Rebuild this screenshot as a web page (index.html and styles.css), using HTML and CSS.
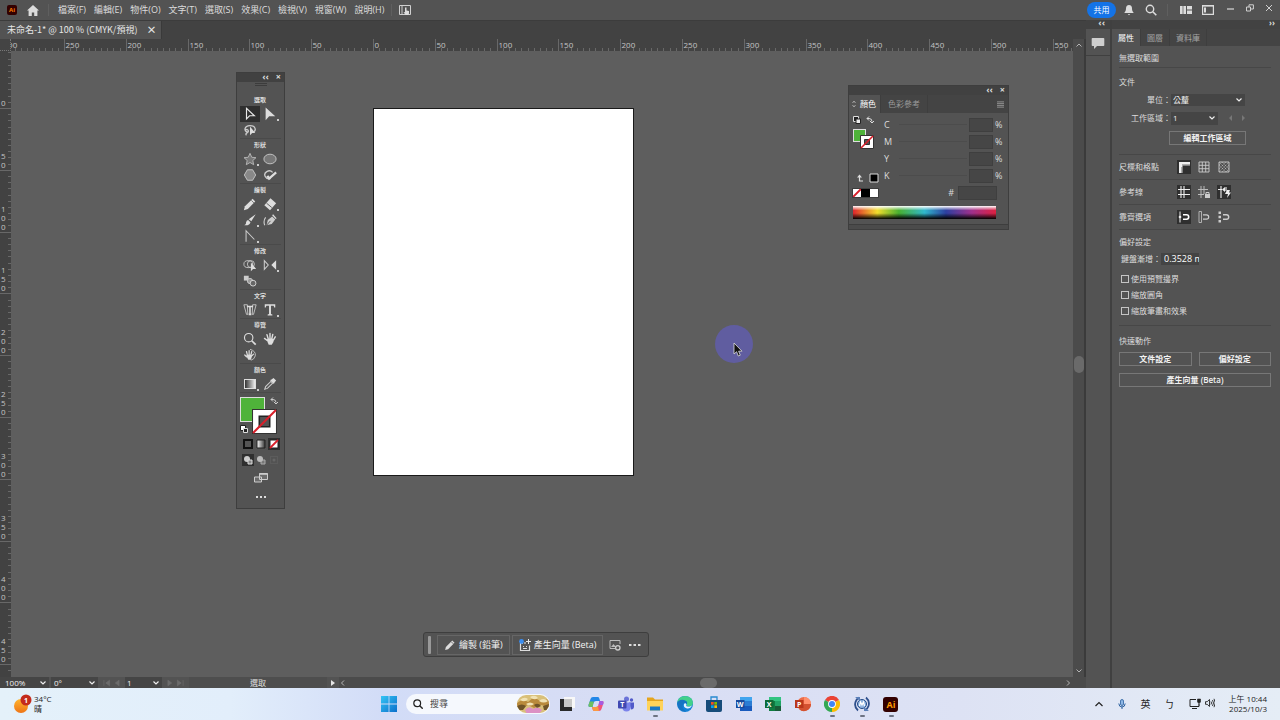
FILE: index.html
```html
<!DOCTYPE html>
<html lang="zh-Hant">
<head>
    <meta charset="UTF-8">
    <meta name="viewport" content="width=device-width, initial-scale=1.0">
    <title>未命名-1* @ 100 % (CMYK/預視)</title>
    <link rel="stylesheet" href="styles.css">
</head>
<body>

<header class="menubar">
    <span class="ai-logo">Ai</span>
    <button class="icon-btn" aria-label="首頁"><svg class="home" viewBox="0 0 12 11"><path d="M6 0 0 5.500h1.600V11h3.200V7.500h2.400V11h3.200V5.500H12z" fill="#dcdcdc"/></svg></button>
    <span class="sep"></span>
    <nav class="menus">
        <button>檔案(F)</button>
        <button>編輯(E)</button>
        <button>物件(O)</button>
        <button>文字(T)</button>
        <button>選取(S)</button>
        <button>效果(C)</button>
        <button>檢視(V)</button>
        <button>視窗(W)</button>
        <button>說明(H)</button>
    </nav>
    <span class="sep"></span>
    <button class="icon-btn touch" aria-label="觸控"><svg class="s12" viewBox="0 0 12 12"><path d="M.5 1.500h11v9H.5zM3 1.500v9" fill="none" stroke="#d0d0d0"/><path d="M6 3.500h1.500v3l2.500.5v2.500L9 11H6.500L4.500 8l1.500.3z" fill="#ddd"/></svg></button>
    <div class="menubar-right">
        <button class="share">共用</button>
        <button class="icon-btn" aria-label="通知"><svg class="s12" viewBox="0 0 12 12"><path d="M6 1c-2 0-3 1.500-3 3.500 0 2-.7 3-1.500 4v.5h9v-.5C9.700 7.500 9 6.500 9 4.500 9 2.500 8 1 6 1zM4.800 10h2.400L6 11.200z" fill="#dcdcdc"/></svg></button>
        <button class="icon-btn" aria-label="搜尋"><svg class="s12" viewBox="0 0 12 12"><circle cx="5" cy="5" r="3.700" fill="none" stroke="#dcdcdc" stroke-width="1.400"/><path d="m7.800 7.800 3.500 3.500" stroke="#dcdcdc" stroke-width="1.600"/></svg></button>
        <span class="sep"></span>
        <button class="icon-btn" aria-label="排列文件"><svg class="s12" viewBox="0 0 12 12"><path d="M0 2h6v8H0zM7 2h5v3.500H7zM7 6.500h5V10H7z" fill="#dcdcdc"/><path d="M3 2v8" stroke="#535353" stroke-width=".7"/></svg></button>
        <button class="icon-btn" aria-label="工作區"><svg class="s12" viewBox="0 0 12 12"><path d="M.6 1.600h10.800v8.800H.6z" fill="none" stroke="#dcdcdc" stroke-width="1.200"/><path d="M2 3.500h2v5H2zM.6 1h10.800v1.500H.6z" fill="#dcdcdc"/></svg></button>
        <div class="window-btns">
            <button aria-label="最小化"><svg class="s8" viewBox="0 0 8 8"><path d="M0 5h7" stroke="#d0d0d0" stroke-width="1.300"/></svg></button>
            <button aria-label="還原"><svg class="s8" viewBox="0 0 8 8"><path d="M.5 3h4v4h-4zM3 3V.8h4.400V5H4.500" fill="none" stroke="#d0d0d0"/></svg></button>
            <button aria-label="關閉"><svg class="s8" viewBox="0 0 8 8"><path d="m1 1 6 6M7 1 1 7" stroke="#d0d0d0"/></svg></button>
        </div>
    </div>
</header>

<main class="app">
    <section class="document">
        <div class="doc-tabs">
            <div class="doc-tab"><span>未命名-1* @ 100 % (CMYK/預視)</span><button aria-label="關閉">×</button></div>
        </div>
        <div class="doc-view">
            <div class="ruler-corner"></div>
            <svg class="ruler-h" id="rulerH"></svg>
            <div class="scroll-v">
                <svg class="s6" viewBox="0 0 6 6"><path d="m0.500 4.500 2.500-2.500 2.500 2.500" fill="none" stroke="#b5b5b5"/></svg>
                <i class="thumb"></i>
                <svg class="s6" viewBox="0 0 6 6"><path d="m0.500 1.500 2.500 2.500 2.500-2.500" fill="none" stroke="#b5b5b5"/></svg>
            </div>
            <svg class="ruler-v" id="rulerV"></svg>
            <div class="canvas">
                <div class="artboard"></div>
                <div class="pointer">
                    <svg viewBox="0 0 10 15"><path d="M1 1v11l2.600-2.300L5.300 14l2-.8-1.700-4H9z" fill="#111" stroke="#ddd" stroke-width=".8"/></svg>
                </div>
            </div>
        </div>
        <div class="statusbar">
            <select class="zoom" aria-label="縮放"><option>100%</option></select>
            <select class="angle" aria-label="旋轉"><option>0°</option></select>
            <span class="nav-arrows"><svg viewBox="0 0 20 8"><path d="M2 1v6M8 1 4 4l4 3zM18 1l-4 3 4 3z" fill="#6c6c6c" stroke="#6c6c6c" stroke-width=".7"/></svg></span>
            <select class="board" aria-label="工作區域導覽"><option>1</option></select>
            <span class="nav-arrows"><svg viewBox="0 0 20 8"><path d="m2 1 4 3-4 3zM12 1l4 3-4 3zM18 1v6" fill="#6c6c6c" stroke="#6c6c6c" stroke-width=".7"/></svg></span>
            <span class="current-tool">選取</span>
            <button class="play" aria-label="顯示選單"><svg class="s6" viewBox="0 0 6 6"><path d="M1 0v6l4-3z" fill="#e6e6e6"/></svg></button>
            <div class="scroll-h">
                <svg class="s6" viewBox="0 0 6 6"><path d="M4 .5 1.500 3 4 5.500" fill="none" stroke="#b5b5b5"/></svg>
                <i class="thumb"></i>
                <svg class="s6" viewBox="0 0 6 6"><path d="M2 .5 4.500 3 2 5.500" fill="none" stroke="#b5b5b5"/></svg>
            </div>
        </div>
    </section>

    <aside class="dock">
        <div class="strip">‹‹</div>
        <button class="comments" aria-label="註解"><svg viewBox="0 0 14 13"><path d="M1.500 1h11q.8 0 .8.800v6.400q0 .8-.8.800H6l-3 3V9H1.500q-.8 0-.8-.8V1.800Q.7 1 1.500 1z" fill="#cfcfcf"/></svg></button>
    </aside>

    <aside class="properties">
        <div class="strip">››</div>
        <div class="tabs">
            <button class="active">屬性</button>
            <button>圖層</button>
            <button>資料庫</button>
        </div>
        <section class="no-selection">無選取範圍</section>
        <section class="doc-section">
            <h2>文件</h2>
            <div class="field"><label for="unit">單位：</label><select id="unit" class="unit"><option>公釐</option></select></div>
            <div class="field"><label for="board">工作區域：</label><select id="board" class="board-no"><option>1</option></select><span class="steps"><svg viewBox="0 0 18 6"><path d="M4 0v6L1 3zM14 0v6l3-3z" fill="#777"/></svg></span></div>
            <button class="outline edit-board">編輯工作區域</button>
        </section>
        <section class="toggles">
            <span>尺標和格點</span>
            <button class="on" aria-label="尺標"><svg viewBox="0 0 14 14"><path d="M2 2h11v3.500H5.500V13H2z" fill="#eee"/><path d="M6 4v1.500M8 4v1.500M10 4v1.500M12 4v1.500M4 8h1.500M4 10h1.500M4 12h1.500" stroke="#333" stroke-width=".7"/></svg></button>
            <button aria-label="格點"><svg viewBox="0 0 14 14"><path d="M2 2h10v10H2zM5.300 2v10M8.700 2v10M2 5.300h10M2 8.700h10" fill="none" stroke="#ccc" stroke-width=".9"/></svg></button>
            <button aria-label="透明度格點"><svg viewBox="0 0 14 14"><path d="M2 2h10v10H2z" fill="none" stroke="#ccc" stroke-width=".9"/><path d="m2 5 3-3M2 9l7-7M2 12 12 2M5 12l7-7M9 12l3-3M5 2l7 7M2 2l10 10M2 5l7 7" stroke="#bbb" stroke-width=".8" stroke-dasharray="1.200 1"/></svg></button>
        </section>
        <section class="toggles">
            <span>參考線</span>
            <button class="on" aria-label="顯示參考線"><svg viewBox="0 0 14 14"><path d="M1 4.500h12M1 9.500h12M4 1v12M7 1v12" stroke="#eee" stroke-width="1.100"/></svg></button>
            <button aria-label="鎖定參考線"><svg viewBox="0 0 14 14"><path d="M1 4.500h10M1 9.500h6M4 1v12M7 1v8" stroke="#bbb"/><path d="M8 9h5v4H8z" fill="#ccc"/><path d="M9 9V7.500h3V9" fill="none" stroke="#ccc"/></svg></button>
            <button class="on" aria-label="智慧型參考線"><svg viewBox="0 0 14 14"><path d="M1 4.500h4M4 1v12M9 2v4" stroke="#eee" stroke-width="1.100"/><path d="m5 4.500 3-2.500v5zM10 5h3l-1 2.500h2l-4 5.500 1-4H8z" fill="#eee"/></svg></button>
        </section>
        <section class="toggles">
            <span>靠齊選項</span>
            <button class="on" aria-label="靠齊控制點"><svg viewBox="0 0 14 14"><path d="M3 1.500v11" stroke="#eee"/><circle cx="3" cy="7" r="1.300" fill="#eee"/><path d="M6 4.800h3.500a2.200 2.200 0 0 1 0 4.400H6" fill="none" stroke="#fff" stroke-width="1.600"/></svg></button>
            <button aria-label="靠齊格點"><svg viewBox="0 0 14 14"><path d="M2 1.500h2.500v11H2z" fill="none" stroke="#bbb" stroke-width=".9"/><path d="M6 4.800h3.500a2.200 2.200 0 0 1 0 4.400H6" fill="none" stroke="#ccc" stroke-width="1.200"/></svg></button>
            <button aria-label="靠齊像素"><svg viewBox="0 0 14 14"><path d="M1.500 1.500H4V4H1.500zM1.500 5.800H4v2.500H1.500zM1.500 10H4v2.500H1.500z" fill="#ccc"/><path d="M6 4.800h3.500a2.200 2.200 0 0 1 0 4.400H6" fill="none" stroke="#ccc" stroke-width="1.400"/></svg></button>
        </section>
        <section class="prefs">
            <h2>偏好設定</h2>
            <div class="field"><label for="nudge">鍵盤漸增：</label><input id="nudge" type="text" value="0.3528 mm"></div>
            <label class="check"><input type="checkbox">使用預覽邊界</label>
            <label class="check"><input type="checkbox">縮放圓角</label>
            <label class="check"><input type="checkbox">縮放筆畫和效果</label>
        </section>
        <section class="quick">
            <h2>快速動作</h2>
            <div class="quick-grid">
                <button class="outline">文件設定</button>
                <button class="outline">偏好設定</button>
                <button class="outline wide">產生向量 (Beta)</button>
            </div>
        </section>
    </aside>

    <!-- tools -->
    <div class="float toolbox">
        <div class="float-head"><span>‹‹</span><button aria-label="關閉">×</button></div>
        <div class="grip"></div>
        <div class="group">
            <h3>選取</h3>
            <button class="on" aria-label="選取工具"><svg viewBox="0 0 16 16"><path d="M4 1.500v12l3.500-3.500H13z" fill="none" stroke="#e8e8e8" stroke-width="1.300"/></svg></button>
            <button class="more" aria-label="直接選取工具"><svg viewBox="0 0 16 16"><path d="M3 .5v14.500l4-4.500h7z" fill="#ddd"/></svg></button>
            <button aria-label="套索工具"><svg viewBox="0 0 16 16"><path d="M5 10C1 10 1 3 8 3c7 0 7 6 4 7M3 8c3-2 4 2 2 3s-2 2-1 3" fill="none" stroke="#ccc" stroke-width="1.500"/><path d="M8 4v10l2.500-2.500H14z" fill="#ddd"/></svg></button>
        </div>
        <div class="group">
            <h3>形狀</h3>
            <button class="more" aria-label="星形工具"><svg viewBox="0 0 16 16"><path d="m8 1.500 2 4.500 4.800.5-3.600 3.200 1 4.800L8 12l-4.200 2.500 1-4.800L1.200 6.500 6 6z" fill="#777" stroke="#bbb"/></svg></button>
            <button aria-label="橢圓形工具"><svg viewBox="0 0 16 16"><ellipse cx="8" cy="8" rx="7" ry="5.500" fill="#777" stroke="#ccc"/></svg></button>
            <button aria-label="多邊形工具"><svg viewBox="0 0 16 16"><path d="M5 2h6l3.500 6-3.500 6H5L1.500 8z" fill="#888" stroke="#ccc"/></svg></button>
            <button aria-label="Shaper 工具"><svg viewBox="0 0 16 16"><path d="M11 5A5 4.500 0 1 0 9 12" fill="none" stroke="#ccc" stroke-width="1.500"/><path d="m5 9 2 3 8-7" fill="none" stroke="#ddd" stroke-width="2.600"/></svg></button>
        </div>
        <div class="group">
            <h3>繪製</h3>
            <button aria-label="鉛筆工具"><svg viewBox="0 0 16 16"><path d="m1 15 1.200-4.500L11 2l3 3-8.500 8.700z" fill="#ddd"/><path d="m9.500 3.800 3 3" stroke="#535353" stroke-width=".8"/></svg></button>
            <button class="more" aria-label="橡皮擦工具"><svg viewBox="0 0 16 16"><path d="m1.500 9.500 7-8 6.500 5.500-7 8z" fill="#ddd"/><path d="m4 7 6 5" stroke="#535353"/></svg></button>
            <button class="more" aria-label="繪圖筆刷工具"><svg viewBox="0 0 16 16"><path d="m14.500 1.500-5 8-3-2.500zM5.800 8 8.500 10.500Q8 14.500 1.500 14 4 12.500 3.500 10.500 4 8.500 5.800 8z" fill="#ddd"/></svg></button>
            <button aria-label="曲線工具"><svg viewBox="0 0 16 16"><path d="M2 14q-2-5 1-9" fill="none" stroke="#ccc" stroke-width="1.300"/><path d="m4 14 1.500-6 5-4L14 7.500l-4 5z" fill="#ccc"/><path d="m4 14 4.500-5" stroke="#444"/><path d="m11 2 4 4.500" stroke="#ddd" stroke-width="1.500"/></svg></button>
            <button class="more" aria-label="錨點工具"><svg viewBox="0 0 16 16"><path d="M3.500 14.500V2L13 12" fill="none" stroke="#ccc" stroke-width="1.200"/></svg></button>
        </div>
        <div class="group">
            <h3>修改</h3>
            <button aria-label="形狀建立程式工具"><svg viewBox="0 0 16 16"><ellipse cx="6" cy="7" rx="5" ry="4" fill="none" stroke="#ccc"/><circle cx="9" cy="7" r="4" fill="none" stroke="#ccc"/><path d="M9 5v10l2.500-2.500H15z" fill="#ddd"/></svg></button>
            <button class="more" aria-label="鏡射工具"><svg viewBox="0 0 16 16"><path d="M1.500 3v10l4.500-5z" fill="none" stroke="#ccc" stroke-width="1.200"/><path d="M15 2.500v11L9.500 8z" fill="#ddd"/></svg></button>
            <button aria-label="漸變工具"><svg viewBox="0 0 16 16"><path d="M1 2h5.500v5.500H1z" fill="#ccc"/><circle cx="8" cy="8" r="3" fill="#999" stroke="#ccc"/><circle cx="11.500" cy="10.500" r="3.300" fill="#666" stroke="#ddd"/></svg></button>
        </div>
        <div class="group">
            <h3>文字</h3>
            <button aria-label="觸控文字工具"><svg viewBox="0 0 16 16"><path d="M1 2h4v1.500L5.500 13H4zM15 2h-4v1.500L10.500 13H12z" fill="none" stroke="#ccc"/><path d="M4.500 4h7M8 4v9M6.500 13h3" stroke="#ddd" stroke-width="1.800"/></svg></button>
            <button class="more" aria-label="文字工具"><svg viewBox="0 0 16 16"><path d="M2 1.500h12v3.500h-1.200l-.6-1.800H9.100v9.500l1.600.5v1H5.300v-1l1.600-.5V3.200H3.800L3.200 5H2z" fill="#ddd"/></svg></button>
        </div>
        <div class="group">
            <h3>導覽</h3>
            <button aria-label="縮放顯示工具"><svg viewBox="0 0 16 16"><circle cx="6.500" cy="6.500" r="4.800" fill="none" stroke="#ddd" stroke-width="1.300"/><path d="m10 10 4.500 4.500" stroke="#ddd" stroke-width="2"/></svg></button>
            <button aria-label="手形工具"><svg viewBox="0 0 16 16"><path d="M4.500 9.500 1.700 7.300M6 8 4.500 3M8 8V1.700M10 8l1.200-5.300M12 9l2-3.500" stroke="#ddd" stroke-width="1.600" stroke-linecap="round"/><path d="M4 8.500q4-2 8.500-.5 0 4-2.500 6.500H6.500z" fill="#ddd"/></svg></button>
            <button aria-label="旋轉檢視工具"><svg viewBox="0 0 16 16"><path d="M4 10 2 8M5 8 4 4M7 8V3M9 8l1-4M10 9l2-2" stroke="#ddd" stroke-width="1.400" stroke-linecap="round"/><path d="M3.500 8.500q4-2 7 0l-1.500 5H6z" fill="#ddd"/><path d="M8 1.500q7 2 6 7.500-1 4-5 5" fill="none" stroke="#ccc"/></svg></button>
        </div>
        <div class="group">
            <h3>顏色</h3>
            <button class="more" aria-label="漸層工具"><span class="grad"></span></button>
            <button aria-label="檢色滴管工具"><svg viewBox="0 0 16 16"><path d="m2 14 1-3 6-6 2 2-6 6z" fill="none" stroke="#ccc" stroke-width="1.200"/><path d="m8 3.500 1.300-.5L12 1l3 3-2 2.700-.5 1.300z" fill="#ddd"/></svg></button>
        </div>
        <div class="swatches">
            <span class="fill"></span>
            <svg class="stroke" viewBox="0 0 24 24"><path d="M.5.5h23v23H.5z" fill="#fff" stroke="#333"/><path d="M7 7h10v10H7z" fill="#535353" stroke="#222" stroke-width="1.500"/><path d="M1 23 23 1" stroke="#d91f2a" stroke-width="2"/></svg>
            <svg class="swap" viewBox="0 0 8 8"><path d="M1 2.500h2q3 0 3 3M3 .5l-2 2 2 2M4 5l2 2 2-2" fill="none" stroke="#ccc"/></svg>
            <svg class="default" viewBox="0 0 8 8"><path d="M.5.5h5v5h-5z" fill="#fff" stroke="#222"/><path d="M3.500 3.500h4v4h-4z" fill="#222" stroke="#ddd"/></svg>
        </div>
        <div class="modes">
            <button aria-label="顏色"><svg viewBox="0 0 10 10"><path d="M1 1h8v8H1z" fill="#555" stroke="#111" stroke-width="2"/></svg></button>
            <button aria-label="漸層"><svg viewBox="0 0 10 10"><defs><linearGradient id="g1"><stop stop-color="#fff"/><stop offset="1" stop-color="#333"/></linearGradient></defs><path d="M1 1h8v8H1z" fill="url(#g1)" stroke="#222"/></svg></button>
            <button class="on" aria-label="無"><svg viewBox="0 0 10 10"><path d="M1 1h8v8H1z" fill="#fff" stroke="#222"/><path d="m1 9 8-8" stroke="#d91f2a" stroke-width="1.800"/></svg></button>
        </div>
        <div class="modes">
            <button class="on" aria-label="一般繪製"><svg viewBox="0 0 10 10"><circle cx="4" cy="4" r="3" fill="#ccc"/><path d="M5 5h4v4H5z" fill="#888" stroke="#ddd"/></svg></button>
            <button aria-label="繪製下層"><svg viewBox="0 0 10 10"><path d="M5 5h4v4H5z" fill="#777" stroke="#aaa"/><circle cx="4" cy="4" r="3" fill="#bbb"/></svg></button>
            <button aria-label="繪製內側"><svg viewBox="0 0 10 10"><path d="M1.500 1.500h7v7h-7z" fill="none" stroke="#666" stroke-dasharray="1 1"/><circle cx="5" cy="5" r="1.500" fill="#666"/></svg></button>
        </div>
        <button class="screen" aria-label="變更螢幕模式"><svg viewBox="0 0 16 12"><path d="M1.500 5h7v5h-7zM6.500 1.500h8v6h-8z" fill="#6c6c6c" stroke="#ccc"/><path d="M6.500 2h8" stroke="#ccc" stroke-width="1.600"/></svg></button>
        <button class="dots" aria-label="編輯工具列"><svg viewBox="0 0 10 4"><path d="M0 1h2v2H0zM4 1h2v2H4zM8 1h2v2H8z" fill="#ddd"/></svg></button>
    </div>

    <!-- colour panel -->
    <div class="float colors">
        <div class="float-head"><span>‹‹</span><button aria-label="關閉">×</button></div>
        <div class="color-tabs">
            <button class="active"><svg class="updown" viewBox="0 0 4 8"><path d="M.5 3 2 1l1.500 2M.5 5 2 7l1.500-2" fill="none" stroke="#bbb" stroke-width=".8"/></svg>顏色</button>
            <button>色彩參考</button>
            <svg class="burger" viewBox="0 0 8 8"><path d="M0 1h8M0 3h8M0 5h8M0 7h8" stroke="#999"/></svg>
        </div>
        <div class="color-body">
            <div class="color-side">
                <div class="mini-row">
                    <svg class="s8" viewBox="0 0 8 8"><path d="M.5.5h5v5h-5z" fill="#222" stroke="#ddd"/><path d="M3 3h4.500v4.500H3z" fill="#eee" stroke="#222"/></svg>
                    <svg class="s8" viewBox="0 0 8 8"><path d="M1 2.500h2q3 0 3 3M3 .5l-2 2 2 2M4 5l2 2 2-2" fill="none" stroke="#ddd"/></svg>
                </div>
                <div class="mini-swatches">
                    <span class="fill"></span>
                    <svg class="stroke" viewBox="0 0 14 14"><path d="M.5.5h13v13H.5z" fill="#fff" stroke="#333"/><path d="M4.500 4.500h5v5h-5z" fill="#535353" stroke="#333"/><path d="M1 13 13 1" stroke="#d91f2a" stroke-width="1.600"/></svg>
                </div>
                <div class="mini-row low">
                    <svg class="s8" viewBox="0 0 8 8"><path d="M3.500 2v5H7" fill="none" stroke="#ddd" stroke-width="1.200"/><path d="M1 3.500 3.500.5 6 3.500z" fill="#ddd"/></svg>
                    <svg class="s10" viewBox="0 0 10 10"><path d="M1 1h8v8H1z" fill="#000" stroke="#ddd"/></svg>
                </div>
            </div>
            <div class="channels">
                <label for="c">C</label><input type="range" aria-label="C" value="0"><input type="text" id="c"><span>%</span>
                <label for="m">M</label><input type="range" aria-label="M" value="0"><input type="text" id="m"><span>%</span>
                <label for="y">Y</label><input type="range" aria-label="Y" value="0"><input type="text" id="y"><span>%</span>
                <label for="k">K</label><input type="range" aria-label="K" value="0"><input type="text" id="k"><span>%</span>
            </div>
        </div>
        <div class="hex-row">
            <svg viewBox="0 0 27 10"><path d="M1 1h8v8H1z" fill="#fff"/><path d="m1 9 8-8" stroke="#d91f2a" stroke-width="1.800"/><path d="M9 1h9v8H9z"/><path d="M18 1h8v8h-8z" fill="#fff"/><path d="M.5.5h26v9H.5z" fill="none" stroke="#333" stroke-width=".7"/></svg>
            <label for="hex">#</label><input type="text" id="hex">
        </div>
        <div class="spectrum"></div>
        <div class="float-foot"></div>
    </div>

    <!-- contextual task bar -->
    <div class="float taskbar-float">
        <i class="handle"></i>
        <button class="action"><svg class="s12" viewBox="0 0 16 16"><path d="m1.500 14.500 1-4L11 2l3 3-8.500 8.500z" fill="#ddd"/><path d="m9.500 3.500 3 3" stroke="#535353"/></svg>繪製 (鉛筆)</button>
        <button class="action"><svg class="s12" viewBox="0 0 12 12"><path d="M4 4.500H1.500v7h9v-5" fill="none" stroke="#ddd" stroke-width="1.200"/><path d="M4 7h1v1H4zM7 7h1v1H7zM4 9h4v1H4z" fill="#ddd"/><circle cx="2.500" cy="2.500" r="2.400" fill="#3a8df0"/><path d="M9.500 0v5M7 2.500h5M6 3v2" stroke="#e8e8e8"/></svg>產生向量 (Beta)</button>
        <button class="plain" aria-label="文件設定"><svg class="s12" viewBox="0 0 12 12"><path d="M6 9.500H1v-8h10V5" fill="none" stroke="#bbb"/><path d="m2 8 2.500-3L7 8z" fill="#bbb"/><circle cx="8.800" cy="8.800" r="2.200" fill="none" stroke="#ccc" stroke-width="1.300"/></svg></button>
        <button class="plain" aria-label="更多"><svg class="s12" viewBox="0 0 12 12"><path d="M0 5h2.500v2H0zM4.500 5H7v2H4.500zM9 5h2.500v2H9z" fill="#ddd"/></svg></button>
    </div>
</main>

<footer class="win-taskbar">
    <div class="weather">
        <svg viewBox="0 0 18 20"><defs><linearGradient id="sun" x2="0" y2="1"><stop stop-color="#ffb52e"/><stop offset="1" stop-color="#ee7416"/></linearGradient></defs><circle cx="7" cy="12" r="7" fill="url(#sun)"/><circle cx="12" cy="6" r="5.500" fill="#c42b1c"/><text x="12" y="9" text-anchor="middle">1</text></svg>
        <div><div>34°C</div><div>晴</div></div>
    </div>
    <div class="center">
        <button class="win-icon" aria-label="開始"><svg viewBox="0 0 16 16"><defs><linearGradient id="win" x2="1" y2="1"><stop stop-color="#35c5f5"/><stop offset="1" stop-color="#0b6fcb"/></linearGradient></defs><path d="M0 0h7.600v7.600H0zM8.400 0H16v7.600H8.400zM0 8.400h7.600V16H0zM8.400 8.400H16V16H8.400z" fill="url(#win)"/></svg></button>
        <div class="search">
            <svg class="s10" viewBox="0 0 10 10"><circle cx="4.200" cy="4.200" r="3.400" fill="none" stroke="#222" stroke-width="1.200"/><path d="m6.700 6.700 3 3" stroke="#222" stroke-width="1.400"/></svg>
            <input type="text" placeholder="搜尋" aria-label="搜尋">
            <svg class="photo" viewBox="0 0 32 18"><defs><clipPath id="pill"><rect width="32" height="18" rx="9"/></clipPath></defs><g clip-path="url(#pill)"><path d="M0 0h32v18H0z" fill="#d9c07a"/><path d="M0 8 6 4l5 3 6-5 6 4 9-2v8l-8-2-7 3-6-3-6 3-5-1z" fill="#b98a3c"/><path d="M3 5q4-4 8-1-3 4-8 1zM13 2q5-3 8 1-4 3-8-1zM22 6q4-4 9 0-4 3-9 0zM9 9q4-3 8 0-4 3-8 0z" fill="#f0e2b4"/><path d="M0 11q5-3 9 0l-3 4H0zM17 10q4-3 7 1l-4 2zM26 11l6-2v6h-5z" fill="#6f5428"/><path d="M8 15q4-5 8-1 5-3 9 1l-3 4H10z" fill="#dc90c4"/></g></svg>
        </div>
        <div class="apps">
            <button class="win-icon" aria-label="工作檢視"><svg viewBox="0 0 16 16"><path d="M5 1h11v11H5z" fill="#f8f8f8"/><path d="M1 3h4v8h8v4H1z" fill="#2a2a2a"/><path d="M5 3h8v8H5z" fill="#c9c9c9"/></svg></button>
            <button class="win-icon" aria-label="Copilot"><svg viewBox="0 0 16 16"><path d="M5 1h5q1 0 1.500 2l.5 2H8Q6 5 5.500 7L4.500 11H2Q0 11 .5 9L2.500 3Q3 1 5 1z" fill="#2387e8"/><path d="M1.700 5.500h4.200L4.500 11H2Q0 11 .5 9z" fill="#6fc060"/><path d="M11 15H6q-1 0-1.500-2L4 11h4q2 0 2.500-2l1-4H14q2 0 1.500 2l-2 6Q13 15 11 15z" fill="#f0527c"/><path d="m11.500 5-1 4H15l.5-2Q16 5 14 5z" fill="#a65be0"/><path d="M4 11h4q1.500 0 2-1l1 5H6q-1 0-1.500-2z" fill="#fa9a42"/></svg></button>
            <button class="win-icon" aria-label="Teams"><svg viewBox="0 0 16 16"><circle cx="8.500" cy="3" r="2.500" fill="#6b73d8"/><circle cx="13.500" cy="4" r="1.700" fill="#5059c9"/><path d="M11 6.500h5v4q0 3-3 3z" fill="#5059c9"/><path d="M5 6.500h7.500v5q0 4-4 4t-4-4z" fill="#7b83eb"/><rect x="0" y="4.500" width="8.500" height="8" rx="1" fill="#4048b2"/><text x="4.200" y="11" text-anchor="middle">T</text></svg></button>
            <button class="win-icon running" aria-label="檔案總管"><svg viewBox="0 0 16 16"><path d="M0 1.500h6L8 3.500h8v10H0z" fill="#e5a51d"/><path d="M0 5h16v9.500H0z" fill="#ffd35a"/><path d="M3 10.500h10v4H3z" fill="#1b78c4"/></svg></button>
            <button class="win-icon" aria-label="Edge"><svg viewBox="0 0 16 16"><circle cx="8" cy="8" r="8" fill="#1482d8"/><path d="M.2 7Q1 0 8.500 0 16 1 16 7q-.5 4-5 3.500-2-.5-1-2 .5-3-3-3.500Q2 4.500.2 7z" fill="#42d08b"/><path d="M.2 7Q2 3 7 4q4 1 3 4-2-2-4 0-2 4 3 7.500Q1 16 .2 7z" fill="#1674c2"/><path d="M9.500 8.500q-1 2 1.500 2 2 .5 4-1-1.500 3.500-5 3Q6 11.500 7 8q1.500-1.500 2.500.5z" fill="#e4f2ff"/></svg></button>
            <button class="win-icon" aria-label="Microsoft Store"><svg viewBox="0 0 16 16"><path d="M5 4V1h6v3" fill="none" stroke="#278ad0" stroke-width="1.300"/><path d="M0 4h16v10q0 2-2 2H2q-2 0-2-2z" fill="#164c7a"/><path d="M5 6h2.700v2.700H5z" fill="#f25022"/><path d="M8.300 6H11v2.700H8.300z" fill="#7fba00"/><path d="M5 9.300h2.700V12H5z" fill="#00a4ef"/><path d="M8.300 9.300H11V12H8.300z" fill="#ffb900"/></svg></button>
            <button class="win-icon" aria-label="Word"><svg viewBox="0 0 16 16"><path d="M4 1h12v5H4z" fill="#41a5ee"/><path d="M4 5h12v5H4z" fill="#2b7cd3"/><path d="M4 10h12v5H4z" fill="#185abd"/><path d="M0 4h8.500v8H0z" fill="#164a9c"/><text x="4.200" y="10.500" text-anchor="middle">W</text></svg></button>
            <button class="win-icon" aria-label="Excel"><svg viewBox="0 0 16 16"><path d="M4 1h12v5H4z" fill="#33c481"/><path d="M4 5h12v10H4z" fill="#21a366"/><path d="M4 5h6v10H4z" fill="#107c41"/><path d="M10 10h6v5h-6z" fill="#185c37"/><path d="M0 4h8.500v8H0z" fill="#0e6b38"/><text x="4.200" y="10.500" text-anchor="middle">X</text></svg></button>
            <button class="win-icon" aria-label="PowerPoint"><svg viewBox="0 0 16 16"><circle cx="9" cy="8" r="7" fill="#ed6c47"/><path d="M9 1a7 7 0 0 1 7 7H9z" fill="#ff8f6b"/><path d="M9 8h7a7 7 0 0 1-12 5z" fill="#d35230"/><path d="M0 4h8.500v8H0z" fill="#b9371a"/><text x="4.200" y="10.500" text-anchor="middle">P</text></svg></button>
            <button class="win-icon running" aria-label="Chrome"><svg viewBox="0 0 16 16"><path d="M8 8 1 4a8 8 0 0 1 14 0z" fill="#ea4335"/><path d="M8 8l7-4a8 8 0 0 1-7 12z" fill="#fbbc04"/><path d="M8 8v8A8 8 0 0 1 1 4z" fill="#34a853"/><path d="m8 16 4-7-4-1z" fill="#fbbc04"/><circle cx="8" cy="8" r="3.900" fill="#fff"/><circle cx="8" cy="8" r="3" fill="#4285f4"/></svg></button>
            <button class="win-icon running" aria-label="同步"><svg viewBox="0 0 16 16"><circle cx="8" cy="8" r="4.500" fill="#8fb3e0" stroke="#234a86"/><path d="m5.500 10 1-4L8 9l1.500-3 1 4" fill="none" stroke="#fff" stroke-width="1.200"/><path d="M4 14.500Q0 11 1.500 6 2.500 3 5 1.500M12 1.500q4 3.500 2.500 8.500-1 3-3.500 4.500" fill="none" stroke="#2d4f8c" stroke-width="1.800"/><path d="M1 1h5v4zM15 15h-5v-4z" fill="#5a7fb8"/></svg></button>
            <button class="win-icon running" aria-label="Illustrator"><span class="ai-app">Ai</span></button>
        </div>
    </div>
    <div class="tray">
        <svg class="s8" viewBox="0 0 8 8"><path d="M.5 6 4 2.500 7.500 6" fill="none" stroke="#222" stroke-width="1.200"/></svg>
        <svg class="s10" viewBox="0 0 10 10"><rect x="3.500" y="0.500" width="3" height="6" rx="1.500" fill="#8fb8e6" stroke="#2a5f9e" stroke-width=".8"/><path d="M1.800 4.500Q2 8 5 8t3.200-3.500M5 8v2" fill="none" stroke="#2a5f9e"/></svg>
        <span class="ime">英</span>
        <span class="ime">ㄅ</span>
        <span class="net">
            <svg class="s12" viewBox="0 0 12 12"><path d="M7 1.500H1v7h9V6M3 10.500h5" fill="none" stroke="#222"/><path d="M8.500 1h3v3l-1.500 1.500L8.500 4zM10 5v3" fill="#222" stroke="#222" stroke-width=".6"/></svg>
            <svg class="s10" viewBox="0 0 10 10"><path d="M.5 3.700h1.700L4.500 1.500v7L2.200 6.300H.5zM6 3.500q1 1.500 0 3M7.500 2q2 3 0 6M9 .8q2.500 4 0 8.400" fill="none" stroke="#222" stroke-width=".9"/></svg>
        </span>
        <div class="clock"><div>上午 10:44</div><div>2025/10/3</div></div>
    </div>
</footer>

<script src="script.js"></script>
</body>
</html>
```

FILE: styles.css
```css
* {
    box-sizing: border-box;
}

body {
    margin: 0;
    height: 100vh;
    display: flex;
    flex-direction: column;
    overflow: hidden;
    background: #535353;
    color: #dcdcdc;
    font: 9px/12px "Open Sans", "Noto Sans CJK TC", sans-serif;
}

button, input, select {
    font: inherit;
    color: inherit;
    margin: 0;
    padding: 0;
    border: 0;
    background: none;
    outline: 0;
}

button {
    display: flex;
    align-items: center;
    justify-content: center;
    white-space: nowrap;
}

svg {
    display: block;
    flex: none;
}

h2, h3 {
    margin: 0;
    font: inherit;
}

.s6 { width: 6px; height: 6px; }
.s8 { width: 8px; height: 8px; }
.s10 { width: 10px; height: 10px; }
.s12 { width: 12px; height: 12px; }

select {
    appearance: none;
    background: #454545 url("data:image/svg+xml,%3Csvg xmlns='http://www.w3.org/2000/svg' viewBox='0 0 6 6'%3E%3Cpath d='m.5 1.500 2.500 2.500 2.500-2.500' fill='none' stroke='%23eee' stroke-width='1.200'/%3E%3C/svg%3E") no-repeat right 3px center / 6px 6px;
    color: #f0f0f0;
}

/* menu bar */
.menubar {
    flex: none;
    height: 20px;
    padding-left: 7px;
    display: flex;
    align-items: center;
    background: #535353;
}

.ai-logo {
    width: 10px;
    height: 10px;
    margin-right: 10px;
    border-radius: 2px;
    background: #330000;
    color: #ff7c00;
    font-size: 6px;
    font-weight: 700;
    line-height: 10px;
    text-align: center;
}

.home {
    width: 12px;
    height: 11px;
}

.sep {
    width: 1px;
    height: 12px;
    margin: 0 9px;
    background: #5f5f5f;
}

.menus {
    display: flex;
    gap: 8px;
}

.menus + .sep {
    margin: 0 7px;
}

.menubar-right {
    margin-left: auto;
    display: flex;
    align-items: center;
}

.share {
    width: 29px;
    height: 16px;
    margin-right: 7px;
    border-radius: 8px;
    background: #1473e6;
    color: #fff;
    font-size: 8px;
}

.menubar-right .icon-btn + .icon-btn {
    margin-left: 10px;
}

.menubar-right .sep {
    margin: 0 12px 0 10px;
}

.window-btns {
    display: flex;
    gap: 11px;
    height: 16px;
    margin: 0 7px 4px 13px;
}

/* workspace */
.app {
    flex: 1;
    min-height: 0;
    display: flex;
    position: relative;
}

.document {
    flex: 1;
    min-width: 0;
    display: flex;
    flex-direction: column;
}

.doc-tabs {
    height: 19px;
    display: flex;
    background: #424242;
    border-top: 1px solid #3c3c3c;
}

.doc-tab {
    display: flex;
    align-items: center;
    gap: 9px;
    padding: 0 5px 0 7px;
    background: #535353;
    border-right: 1px solid #3a3a3a;
    color: #e6e6e6;
    font-family: "Noto Sans CJK TC", sans-serif;
}

.doc-tab button {
    font-size: 10px;
    font-weight: 700;
}

.doc-view {
    flex: 1;
    min-height: 0;
    display: grid;
    grid-template-columns: 11px 1fr 13px;
    grid-template-rows: 12px 1fr;
}

.ruler-corner {
    background: #444;
    border-right: 1px dotted #777;
    border-bottom: 1px dotted #777;
}

.ruler-h, .ruler-v {
    width: 100%;
    height: 100%;
    background: #424242;
    font-size: 8px;
    fill: #c4c4c4;
    stroke: none;
}

.ruler-h line, .ruler-v line {
    stroke: #686868;
}

.scroll-v {
    grid-column: 3;
    grid-row: 1 / 3;
    display: flex;
    flex-direction: column;
    align-items: center;
    justify-content: space-between;
    padding: 3px 1px;
    background: #4b4b4b;
    border-right: 2px solid #3b3b3b;
}

.thumb {
    width: 10px;
    height: 17px;
    border-radius: 5px;
    background: #6a6a6a;
}

.scroll-v .thumb {
    margin-top: 12px;
}

.canvas {
    position: relative;
    overflow: hidden;
    background: #5e5e5e;
}

.artboard {
    position: absolute;
    left: 362px;
    top: 57px;
    width: 261px;
    height: 368px;
    background: #fff;
    border: 1px solid #1a1a1a;
}

.pointer {
    position: absolute;
    left: 704px;
    top: 274px;
    width: 38px;
    height: 38px;
    border-radius: 50%;
    background: #605da0;
}

.pointer svg {
    width: 10px;
    height: 15px;
    margin: 17px 0 0 18px;
}

.statusbar {
    height: 11px;
    display: flex;
    align-items: center;
    background: #535353;
    font-size: 8px;
    line-height: 11px;
}

.statusbar select {
    height: 11px;
}

.zoom {
    width: 49px;
    padding-left: 5px;
}

.angle {
    width: 47px;
    margin-left: 2px;
    padding-left: 3px;
}

.board {
    width: 37px;
    padding-left: 2px;
}

.nav-arrows {
    width: 27px;
    padding: 0 4px;
}

.nav-arrows svg {
    width: 19px;
    height: 8px;
}

.current-tool {
    width: 138px;
    text-align: center;
    background: #4e4e4e;
}

.play {
    width: 12px;
    height: 11px;
}

.scroll-h {
    flex: 1;
    height: 11px;
    display: flex;
    align-items: center;
    justify-content: space-between;
    padding: 0 15px 0 1px;
    background: #4b4b4b;
}

.scroll-h .thumb {
    width: 17px;
    height: 10px;
    margin-left: 6px;
}

.strip {
    height: 9px;
    padding-right: 5px;
    background: #424242;
    line-height: 6px;
    text-align: right;
    font-weight: 700;
}

.dock {
    width: 26px;
    border-right: 2px solid #404040;
}

.comments {
    width: 24px;
    height: 27px;
    padding-top: 3px;
    border-bottom: 1px solid #404040;
}

.comments svg {
    width: 14px;
    height: 13px;
}

/* properties panel */
.properties {
    width: 168px;
    font-size: 8px;
}

.properties .tabs {
    height: 17px;
    display: flex;
    background: #444;
}

.properties .tabs button {
    padding: 0 6px;
    border-right: 1px solid #3e3e3e;
    color: #a5a5a5;
}

.properties .tabs .active {
    background: #535353;
    color: #fff;
}

.properties section {
    margin: 0 9px 0 7px;
    border-bottom: 1px solid #474747;
}

.no-selection {
    padding: 6px 0 3px;
}

.doc-section {
    padding: 8px 0 9px;
}

.field {
    display: flex;
    align-items: center;
}

.doc-section .field {
    height: 14px;
    margin-top: 5px;
}

.doc-section .field label {
    width: 52px;
    text-align: right;
    white-space: nowrap;
}

.doc-section .field + .field {
    margin-top: 4px;
}

.unit {
    width: 74px;
    height: 12px;
    padding-left: 2px;
}

.board-no {
    width: 47px;
    height: 13px;
    padding-left: 2px;
}

.steps svg {
    width: 18px;
    height: 6px;
    margin-left: 10px;
}

.outline {
    height: 14px;
    border: 1px solid #777;
    color: #f2f2f2;
    font-weight: 600;
}

.edit-board {
    width: 77px;
    margin: 6px 0 0 50px;
}

.toggles {
    height: 25px;
    display: flex;
    align-items: center;
    gap: 6px;
}

.toggles span {
    width: 52px;
}

.toggles button {
    width: 14px;
    height: 14px;
}

.toggles svg {
    width: 14px;
    height: 14px;
}

.toggles .on {
    background: #2f2f2f;
}

.prefs {
    padding: 6px 0;
}

.prefs .field {
    height: 16px;
    margin: 3px 0 4px 2px;
}

.prefs .field input {
    width: 38px;
    height: 12px;
    padding-left: 3px;
    background: #444;
    color: #fff;
    font-size: 9px;
}

.check {
    height: 16px;
    display: flex;
    align-items: center;
    gap: 2px;
    padding-left: 2px;
}

.check input {
    appearance: none;
    width: 8px;
    height: 8px;
    border: 1px solid #c4c4c4;
}

.properties .quick {
    padding-top: 9px;
    border: 0;
}

.quick-grid {
    display: grid;
    grid-template-columns: 1fr 1fr;
    gap: 7px;
    margin-top: 5px;
}

.wide {
    grid-column: 1 / 3;
}

/* floating panels */
.float {
    position: absolute;
    background: #535353;
    border: 1px solid #3e3e3e;
}

.float-head {
    height: 9px;
    display: flex;
    align-items: center;
    justify-content: flex-end;
    gap: 7px;
    padding: 0 3px 2px 0;
    background: #414141;
    font-weight: 700;
    line-height: 9px;
}

.toolbox {
    left: 236px;
    top: 52px;
    width: 49px;
}

.grip {
    width: 12px;
    height: 3px;
    margin: 1px auto 8px;
    border-top: 1px solid #3c3c3c;
    border-bottom: 1px solid #3c3c3c;
}

.group {
    display: grid;
    grid-template-columns: 20px 20px;
    grid-template-rows: 12px;
    grid-auto-rows: 16px;
    margin: 0 3px;
    border-bottom: 1px solid #4a4a4a;
}

.group h3 {
    grid-column: 1 / 3;
    font-size: 6px;
    line-height: 12px;
    text-align: center;
    font-weight: 700;
}

.group button {
    position: relative;
}

.group button svg {
    width: 14px;
    height: 14px;
}

.group .on, .modes .on {
    background: #2f2f2f;
}

.more::after {
    content: "";
    position: absolute;
    right: 1px;
    bottom: 1px;
    width: 2px;
    height: 2px;
    background: #ccc;
}

.grad {
    width: 12px;
    height: 10px;
    border: 1px solid #ddd;
    background: linear-gradient(90deg, #333, #eee);
}

.swatches {
    position: relative;
    height: 38px;
    margin: 4px 3px 3px;
}

.swatches svg, .swatches span, .mini-swatches svg, .mini-swatches span {
    position: absolute;
}

.swatches .fill {
    left: 0;
    top: 0;
    width: 25px;
    height: 25px;
    background: #4fb33a;
    border: 1px solid #ddd;
}

.swatches .stroke {
    left: 12px;
    top: 12px;
    width: 25px;
    height: 25px;
}

.swatches .swap {
    left: 30px;
    top: 0;
    width: 8px;
    height: 8px;
}

.swatches .default {
    left: 0;
    top: 28px;
    width: 8px;
    height: 8px;
}

.modes {
    display: flex;
    justify-content: center;
    gap: 1px;
    margin-bottom: 4px;
}

.modes button {
    width: 12px;
    height: 12px;
}

.modes svg {
    width: 10px;
    height: 10px;
}

.screen {
    width: 100%;
    height: 16px;
}

.screen svg {
    width: 16px;
    height: 12px;
}

.dots {
    width: 100%;
    height: 22px;
}

.dots svg {
    width: 10px;
    height: 4px;
}

.colors {
    right: 271px;
    top: 65px;
    width: 161px;
}

.color-tabs {
    height: 18px;
    display: flex;
    align-items: center;
    background: #444;
    font-size: 8px;
}

.color-tabs button {
    height: 18px;
    padding: 0 7px;
    color: #999;
    border-right: 1px solid #3e3e3e;
}

.color-tabs .active {
    padding: 0 4px 0 3px;
    background: #535353;
    color: #fff;
}

.updown {
    width: 4px;
    height: 8px;
    margin-right: 4px;
}

.burger {
    width: 7px;
    height: 7px;
    margin: 0 4px 0 auto;
}

.color-body {
    display: flex;
    padding: 3px 5px 2px 4px;
}

.color-side {
    width: 31px;
}

.mini-row {
    display: flex;
    gap: 5px;
}

.mini-swatches {
    position: relative;
    height: 20px;
    margin: 5px 0 24px;
}

.mini-swatches .fill {
    width: 13px;
    height: 13px;
    background: #4fb33a;
    border: 1px solid #ddd;
}

.mini-swatches .stroke {
    left: 7px;
    top: 6px;
    width: 14px;
    height: 14px;
}

.low {
    padding-left: 3px;
    align-items: center;
}

.channels {
    flex: 1;
    display: grid;
    grid-template-columns: 13px 1fr 24px 8px;
    grid-auto-rows: 17px;
    align-items: center;
    column-gap: 2px;
}

.channels input[type="range"] {
    appearance: none;
    width: 100%;
    height: 1px;
    background: #4c4c4c;
}

.channels input[type="range"]::-webkit-slider-thumb {
    appearance: none;
}

.channels input[type="text"], .hex-row input {
    width: 100%;
    height: 14px;
    background: #464646;
    border: 1px solid #3f3f3f;
}

.hex-row {
    display: flex;
    align-items: center;
    height: 14px;
    margin: 0 11px 0 3px;
}

.hex-row svg {
    width: 27px;
    height: 10px;
}

.hex-row label {
    margin: 0 4px 0 auto;
}

.hex-row input {
    width: 39px;
}

.spectrum {
    height: 13px;
    margin: 6px 12px 5px 4px;
    background: linear-gradient(#fff 0, #fff0 35%, #0000 55%, #000 100%), linear-gradient(90deg, #e0242c, #f2de2c 17%, #48b030 32%, #30b8cc 50%, #2c3fa0 65%, #a0308c 83%, #e02040);
}

.float-foot {
    height: 5px;
    border-top: 1px solid #3e3e3e;
    background: #4b4b4b;
}

.taskbar-float {
    left: 423px;
    top: 612px;
    height: 25px;
    display: flex;
    align-items: center;
    padding: 0 3px 0 4px;
    border-radius: 3px;
}

.handle {
    width: 3px;
    height: 18px;
    margin-right: 6px;
    border-radius: 1px;
    background: #999;
}

.action {
    height: 20px;
    margin-right: 2px;
    padding: 0 6px;
    gap: 3px;
    border: 1px solid #666;
    color: #f2f2f2;
    font-size: 9px;
}

.plain {
    width: 20px;
    height: 20px;
}

/* windows taskbar */
.win-taskbar {
    flex: none;
    height: 32px;
    display: grid;
    grid-template-columns: 1fr auto 1fr;
    align-items: center;
    background: linear-gradient(90deg, #e4f1fa, #e2eefb 18%, #d2dcf7 30%, #d8ddf4 50%, #dde2f4 75%, #e5edf6);
    color: #222;
    font-size: 8px;
    line-height: 10px;
}

.weather {
    display: flex;
    gap: 2px;
    padding-left: 14px;
}

.weather svg {
    width: 18px;
    height: 20px;
}

.weather text, .win-icon text {
    font-size: 7px;
    font-weight: 700;
    fill: #fff;
}

.center {
    display: flex;
    align-items: center;
    gap: 9px;
}

.win-icon {
    position: relative;
    width: 16px;
    height: 16px;
}

.win-icon svg {
    width: 16px;
    height: 16px;
}

.running::after {
    content: "";
    position: absolute;
    left: 6px;
    bottom: -5px;
    width: 5px;
    height: 2px;
    border-radius: 1px;
    background: #6d7383;
}

.search {
    width: 144px;
    height: 20px;
    display: flex;
    align-items: center;
    gap: 7px;
    padding: 0 1px 0 7px;
    border-radius: 10px;
    background: #f5f8fd;
}

.search input {
    flex: 1;
    min-width: 0;
    font-size: 9px;
}

.search input::placeholder {
    color: #444;
}

.photo {
    width: 32px;
    height: 18px;
}

.apps {
    width: 340px;
    display: flex;
    justify-content: space-between;
}

.ai-app {
    width: 15px;
    height: 15px;
    border-radius: 3px;
    background: #330000;
    color: #ff9a00;
    font-size: 9px;
    font-weight: 700;
    line-height: 15px;
}

.tray {
    display: flex;
    align-items: center;
    justify-content: flex-end;
    gap: 14px;
    padding-right: 13px;
}

.ime {
    font-size: 10px;
}

.net {
    display: flex;
    gap: 4px;
}

.clock {
    text-align: right;
}
```

FILE: script.js
```javascript
// pixels per document unit at 100 %
const SCALE = 1.236;

function draw(svg, tag, attrs, text) {
    const el = document.createElementNS('http://www.w3.org/2000/svg', tag);
    for (const key in attrs) el.setAttribute(key, attrs[key]);
    if (text !== undefined) el.textContent = text;
    svg.appendChild(el);
}

function horizontalRuler(svg, origin) {
    for (let u = -300; u <= 570; u += 5) {
        const x = Math.round(origin + u * SCALE) + 0.5;
        const major = u % 50 === 0;
        draw(svg, 'line', { x1: x, x2: x, y1: major ? 0 : 9, y2: 12 });
        if (major) draw(svg, 'text', { x: x + 1, y: 9 }, Math.abs(u));
    }
}

function verticalRuler(svg, origin) {
    for (let u = -45; u <= 460; u += 5) {
        const y = Math.round(origin + u * SCALE) + 0.5;
        const major = u % 50 === 0;
        draw(svg, 'line', { y1: y, y2: y, x1: major ? 0 : 8, x2: 11 });
        if (!major) continue;
        const digits = String(Math.abs(u)).split('');
        digits.forEach((d, i) => {
            draw(svg, 'text', { x: 1, y: y - 3 - (digits.length - 1 - i) * 9 }, d);
        });
    }
}

horizontalRuler(document.getElementById('rulerH'), 362);
verticalRuler(document.getElementById('rulerV'), 57);
```
